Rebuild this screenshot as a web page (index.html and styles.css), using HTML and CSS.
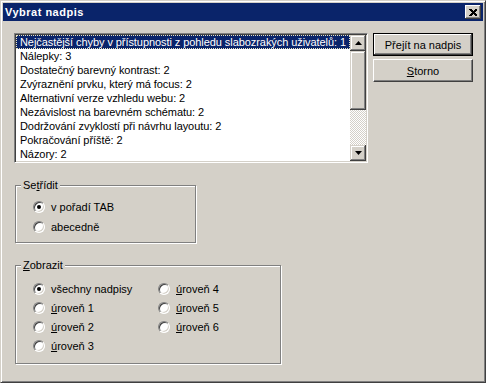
FILE: index.html
```html
<!DOCTYPE html>
<html lang="cs">
<head>
    <meta charset="UTF-8">
    <title>Vybrat nadpis</title>
    <link rel="stylesheet" href="styles.css">
</head>
<body>

    <!-- Okno dialogu -->
    <div class="dialog">
        <div class="titlebar">
            <span class="title">Vybrat nadpis</span>
            <button class="close" aria-label="Zavřít">
                <svg width="8" height="7" viewBox="0 0 8 7" shape-rendering="crispEdges">
                    <path d="M0 0h2l2 2l2-2h2v1l-2.5 2.5l2.5 2.5v1h-2l-2-2l-2 2h-2v-1l2.5-2.5l-2.5-2.5z" fill="#000"/>
                </svg>
            </button>
        </div>

        <div class="content">
            <div class="left">
                <!-- Seznam nadpisů -->
                <div class="listbox">
                    <ul class="items">
                        <li class="selected">Nejčastější chyby v přístupnosti z pohledu slabozrakých uživatelů: 1</li>
                        <li>Nálepky: 3</li>
                        <li>Dostatečný barevný kontrast: 2</li>
                        <li>Zvýraznění prvku, který má focus: 2</li>
                        <li>Alternativní verze vzhledu webu: 2</li>
                        <li>Nezávislost na barevném schématu: 2</li>
                        <li>Dodržování zvyklostí při návrhu layoutu: 2</li>
                        <li>Pokračování příště: 2</li>
                        <li>Názory: 2</li>
                    </ul>
                    <div class="scrollbar">
                        <div class="sb-btn">
                            <svg width="7" height="4" viewBox="0 0 7 4"><path d="M3.5 0L7 4H0z" fill="#000"/></svg>
                        </div>
                        <div class="sb-thumb"></div>
                        <div class="sb-track"></div>
                        <div class="sb-btn">
                            <svg width="7" height="4" viewBox="0 0 7 4"><path d="M0 0h7L3.5 4z" fill="#000"/></svg>
                        </div>
                    </div>
                </div>

                <!-- Řazení -->
                <div class="group group-sort">
                    <span class="group-title">Se<u>t</u>řídit</span>
                    <div class="radio-list">
                        <label class="radio-row"><span class="radio checked"></span><span>v pořadí TAB</span></label>
                        <label class="radio-row"><span class="radio"></span><span>abecedně</span></label>
                    </div>
                </div>

                <!-- Úrovně -->
                <div class="group group-show">
                    <span class="group-title"><u>Z</u>obrazit</span>
                    <div class="radio-grid">
                        <label class="radio-row"><span class="radio checked"></span><span>všechny nadpisy</span></label>
                        <label class="radio-row"><span class="radio"></span><span><u>ú</u>roveň 1</span></label>
                        <label class="radio-row"><span class="radio"></span><span><u>ú</u>roveň 2</span></label>
                        <label class="radio-row"><span class="radio"></span><span><u>ú</u>roveň 3</span></label>
                        <label class="radio-row"><span class="radio"></span><span><u>ú</u>roveň 4</span></label>
                        <label class="radio-row"><span class="radio"></span><span><u>ú</u>roveň 5</span></label>
                        <label class="radio-row"><span class="radio"></span><span><u>ú</u>roveň 6</span></label>
                    </div>
                </div>
            </div>

            <div class="actions">
                <button class="btn default">Přejít na nadpis</button>
                <button class="btn"><u>S</u>torno</button>
            </div>
        </div>
    </div>

</body>
</html>
```

FILE: styles.css
```css
body {
    margin: 0;
    background: #d4d0c8;
    font-family: "Liberation Sans", Arial, sans-serif;
    font-size: 11px;
    color: #000;
}

/* Rám okna */
.dialog {
    box-sizing: border-box;
    width: 486px;
    height: 383px;
    padding: 2px;
    border: 1px solid;
    border-color: #d4d0c8 #404040 #404040 #d4d0c8;
    box-shadow: inset 1px 1px #fff, inset -1px -1px #808080;
    background: #d4d0c8;
}

.titlebar {
    display: flex;
    align-items: center;
    justify-content: space-between;
    height: 18px;
    padding: 0 2px 0 2px;
    background: #0a246a;
}

.title {
    color: #fff;
    font-weight: bold;
    font-size: 11px;
    letter-spacing: 0.5px;
}

.close {
    display: flex;
    align-items: center;
    justify-content: center;
    width: 16px;
    height: 14px;
    padding: 0;
    border: none;
    background: #d4d0c8;
    box-shadow: inset -1px -1px #404040, inset 1px 1px #fff, inset -2px -2px #808080;
}

.close svg {
    margin-left: -1px;
}

/* Obsah */
.content {
    display: flex;
    padding: 12px 0 0 11px;
}

.left {
    display: flex;
    flex-direction: column;
    width: 354px;
}

.listbox {
    box-sizing: border-box;
    display: flex;
    width: 354px;
    height: 130px;
    border: 1px solid;
    border-color: #808080 #fff #fff #808080;
    box-shadow: inset 1px 1px #404040, inset -1px -1px #d4d0c8;
    padding: 1px;
    background: #fff;
}

.items {
    flex: 1;
    list-style: none;
    margin: 0;
    padding: 0;
    overflow: hidden;
}

.items li {
    height: 14px;
    line-height: 14px;
    padding-left: 4px;
    white-space: nowrap;
    letter-spacing: -0.07px;
}

.items li.selected {
    background: #0a246a;
    color: #fff;
    outline: 1px dotted #e8e4c0;
    outline-offset: -1px;
}

.scrollbar {
    display: flex;
    flex-direction: column;
    width: 16px;
}

.sb-btn,
.sb-thumb {
    background: #d4d0c8;
    box-shadow: inset -1px -1px #404040, inset 1px 1px #d4d0c8, inset -2px -2px #808080, inset 2px 2px #fff;
}

.sb-btn {
    display: flex;
    align-items: center;
    justify-content: center;
    height: 16px;
}

.sb-thumb {
    height: 59px;
}

.sb-track {
    flex: 1;
    background: repeating-conic-gradient(#fff 0 25%, #d4d0c8 0 50%) 0 0 / 2px 2px;
}

/* Skupiny */
.group {
    position: relative;
    box-sizing: border-box;
    margin-left: 1px;
    border: 1px solid #808080;
    box-shadow: 1px 1px #fff, inset 1px 1px #fff;
}

.group-title {
    position: absolute;
    top: -7px;
    left: 5px;
    padding: 0 2px;
    line-height: 13px;
    background: #d4d0c8;
}

.group-sort {
    width: 181px;
    height: 58px;
    margin-top: 22px;
    padding: 11px 0 0 17px;
}

.group-show {
    width: 266px;
    height: 99px;
    margin-top: 22px;
    padding: 13px 0 0 17px;
}

.radio-list {
    display: grid;
    grid-auto-rows: 20px;
}

.radio-grid {
    display: grid;
    grid-template-columns: 125px auto;
    grid-template-rows: repeat(4, 19px);
    grid-auto-flow: column;
}

.radio-row {
    display: flex;
    align-items: center;
    gap: 6px;
    white-space: nowrap;
}

.radio {
    position: relative;
    box-sizing: border-box;
    width: 12px;
    height: 12px;
    border-radius: 50%;
    border: 1px solid;
    border-color: #808080 #fff #fff #808080;
    box-shadow: inset 1px 1px #404040, inset -1px -1px #d4d0c8;
    background: #fff;
}

.radio.checked::after {
    content: "";
    position: absolute;
    top: 3px;
    left: 3px;
    width: 4px;
    height: 4px;
    border-radius: 50%;
    background: #000;
}

/* Tlačítka */
.actions {
    display: flex;
    flex-direction: column;
    gap: 3px;
    margin-left: 5px;
}

.btn {
    box-sizing: border-box;
    width: 100px;
    height: 23px;
    padding: 0;
    font-family: inherit;
    font-size: 11px;
    color: #000;
    background: #d4d0c8;
    border: 1px solid;
    border-color: #fff #404040 #404040 #fff;
    box-shadow: inset -1px -1px #808080;
}

.btn.default {
    border: 1px solid #000;
    box-shadow: inset -1px -1px #404040, inset 1px 1px #fff, inset -2px -2px #808080;
}
```
